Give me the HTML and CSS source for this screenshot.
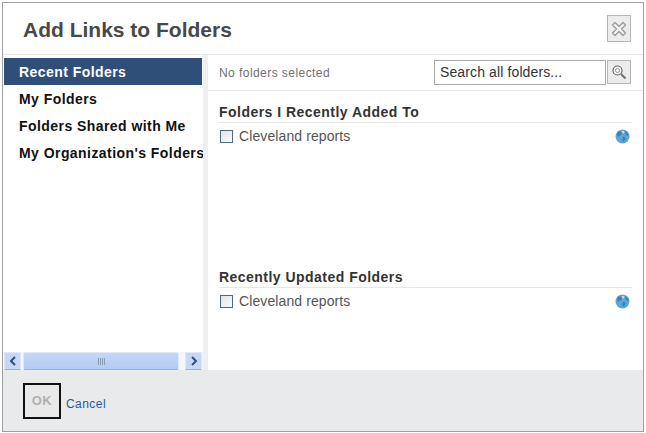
FILE: index.html
```html
<!DOCTYPE html>
<html lang="en">
<head>
<meta charset="utf-8">
<title>Add Links to Folders</title>
<link rel="stylesheet" href="styles.css">
</head>
<body>
<div class="dialog">
  <header class="head">
    <h1 class="title">Add Links to Folders</h1>
    <button class="close" aria-label="Close">
      <svg width="16" height="16" viewBox="0 0 16 16"><path d="M4 1.5 8 5.5 12 1.5 14.500 4 10.500 8 14.500 12 12 14.500 8 10.500 4 14.500 1.500 12 5.500 8 1.500 4Z" fill="#f2f2f2" stroke="#9a9a9a" stroke-width="1.300" stroke-linejoin="round"/></svg>
    </button>
  </header>
  <div class="main">
    <nav class="side">
      <ul class="nav">
        <li class="nav-item active">Recent Folders</li>
        <li class="nav-item">My Folders</li>
        <li class="nav-item">Folders Shared with Me</li>
        <li class="nav-item">My Organization's Folders</li>
      </ul>
      <div class="hscroll">
        <span class="sb-btn"><svg width="8" height="10" viewBox="0 0 8 10"><path d="M6 1 2 5 6 9" fill="none" stroke="#2f4f80" stroke-width="2"/></svg></span>
        <span class="sb-thumb"><span class="grip"></span></span>
        <span class="sb-btn"><svg width="8" height="10" viewBox="0 0 8 10"><path d="M2 1 6 5 2 9" fill="none" stroke="#2f4f80" stroke-width="2"/></svg></span>
      </div>
    </nav>
    <section class="content">
      <div class="toolbar">
        <span class="status">No folders selected</span>
        <div class="search">
          <div class="search-input">Search all folders...</div>
          <button class="search-btn" aria-label="Search">
            <svg width="16" height="16" viewBox="0 0 16 16"><circle cx="6.500" cy="6.500" r="4.500" fill="#f4f4f4" stroke="#666" stroke-width="1.200"/><circle cx="6.500" cy="6.500" r="2" fill="none" stroke="#999"/><path d="M10 10 14.500 14.500" stroke="#777" stroke-width="2.200"/></svg>
          </button>
        </div>
      </div>
      <div class="group first">
        <h2 class="group-title">Folders I Recently Added To</h2>
        <div class="row">
          <span class="check"></span><span class="label">Cleveland reports</span>
          <svg class="globe" width="15" height="15" viewBox="0 0 15 15"><circle cx="7.500" cy="7.500" r="7" fill="#5ba8d8"/><path d="M3 3C5 2 7 3 7 5 6 7 4 6 3 8 2 7 2 5 3 3ZM8 8C10 7 11 9 10 11 9 13 8 13 7.500 11ZM10 2C12 3 13.500 5 13.500 7 12 7 10 5 10 2Z" fill="#3a7fb0"/><path d="M7 2C9 1.500 10 3 9 4 8 5 7 4 7 2Z" fill="#cfe8f5"/></svg>
        </div>
      </div>
      <div class="group">
        <h2 class="group-title">Recently Updated Folders</h2>
        <div class="row">
          <span class="check"></span><span class="label">Cleveland reports</span>
          <svg class="globe" width="15" height="15" viewBox="0 0 15 15"><circle cx="7.500" cy="7.500" r="7" fill="#5ba8d8"/><path d="M3 3C5 2 7 3 7 5 6 7 4 6 3 8 2 7 2 5 3 3ZM8 8C10 7 11 9 10 11 9 13 8 13 7.500 11ZM10 2C12 3 13.500 5 13.500 7 12 7 10 5 10 2Z" fill="#3a7fb0"/><path d="M7 2C9 1.500 10 3 9 4 8 5 7 4 7 2Z" fill="#cfe8f5"/></svg>
        </div>
      </div>
    </section>
  </div>
  <footer class="foot">
    <button class="ok">OK</button>
    <a class="cancel">Cancel</a>
  </footer>
</div>
</body>
</html>
```
FILE: styles.css
```css
* { box-sizing: border-box; }
html, body { margin: 0; padding: 0; background: #fff; }
body { font-family: "Liberation Sans", Arial, sans-serif; }
.dialog {
  margin: 2px 0 0 2px;
  width: 642px;
  height: 430px;
  border: 1px solid #a0a0a0;
  display: flex;
  flex-direction: column;
  background: #fff;
}
.head {
  height: 52px;
  flex: none;
  border-bottom: 1px solid #e6e6e6;
  display: flex;
  align-items: flex-start;
  justify-content: space-between;
  padding: 12px 12px 0 20px;
}
.title {
  margin: 0;
  font-size: 21px;
  line-height: 29px;
  font-weight: bold;
  color: #484848;
}
.close {
  width: 24px;
  height: 27px;
  padding: 0;
  border: 1px solid #b5b5b5;
  background: #ececec;
  display: flex;
  align-items: center;
  justify-content: center;
}
.main { flex: 1; min-height: 0; display: flex; }
.side {
  width: 200px;
  flex: none;
  display: flex;
  flex-direction: column;
  padding-top: 3px;
}
.nav { list-style: none; margin: 0; padding: 0 0 0 1px; flex: 1; }
.nav-item {
  width: 198px;
  height: 27px;
  padding-left: 15px;
  font-size: 14px;
  line-height: 29px;
  font-weight: bold;
  letter-spacing: 0.44px;
  color: #111;
  white-space: nowrap;
}
.nav-item.active { background: #2f4f78; color: #fff; }
.hscroll {
  height: 18px;
  flex: none;
  display: flex;
  align-items: stretch;
  background: #f4f6fa;
  gap: 2px;
  padding: 0 1px;
}
.sb-btn {
  width: 17px;
  flex: none;
  background: #c6d8f6;
  border: 1px solid #dfe8f8;
  border-bottom-color: #9fb2d0;
  display: flex;
  align-items: center;
  justify-content: center;
}
.sb-thumb {
  flex: 1;
  margin-right: 4px;
  background: linear-gradient(#c3d7f8, #b2cbf3);
  border: 1px solid #dfe8f8;
  border-bottom-color: #9fb2d0;
  border-radius: 2px;
  display: flex;
  align-items: center;
  justify-content: center;
}
.grip {
  width: 7px;
  height: 7px;
  background: repeating-linear-gradient(90deg, #8a9bb8 0 1px, transparent 1px 2px);
}
.content {
  flex: 1;
  min-width: 0;
  border-left: 5px solid #eeeff0;
}
.toolbar {
  height: 36px;
  border-bottom: 1px solid #e6e6e6;
  display: flex;
  align-items: flex-start;
  justify-content: space-between;
  padding: 5px 12px 0 11px;
}
.status {
  font-size: 12px;
  line-height: 26px;
  letter-spacing: 0.44px;
  color: #707070;
}
.search { display: flex; gap: 1px; }
.search-input {
  width: 172px;
  height: 25px;
  border: 1px solid #a8a8a8;
  padding-left: 5px;
  font-size: 14px;
  line-height: 23px;
  letter-spacing: 0.12px;
  color: #333;
  background: #fff;
}
.search-btn {
  width: 24px;
  height: 24px;
  padding: 0;
  border: 1px solid #b5b5b5;
  background: #ececec;
  display: flex;
  align-items: center;
  justify-content: center;
}
.group { padding: 0 11px; }
.group.first { height: 165px; padding-top: 13px; margin-bottom: 13px; }
.group-title {
  margin: 0;
  height: 19px;
  border-bottom: 1px solid #e6e6e6;
  font-size: 14px;
  line-height: 17px;
  font-weight: bold;
  letter-spacing: 0.47px;
  color: #333;
}
.row { display: flex; align-items: center; height: 27px; padding-bottom: 1px; }
.check {
  width: 13px;
  height: 13px;
  margin-left: 1px;
  border: 1px solid #4a6a80;
  background: linear-gradient(135deg, #e4e4e4, #fafafa);
  flex: none;
}
.label {
  margin-left: 6px;
  flex: 1;
  font-size: 14px;
  letter-spacing: 0.1px;
  color: #555;
}
.globe { flex: none; margin-right: 2px; }
.foot {
  height: 61px;
  flex: none;
  background: #e9eaeb;
  display: flex;
  align-items: flex-start;
  padding: 13px 0 0 20px;
}
.ok {
  width: 38px;
  height: 36px;
  padding: 0 0 2px;
  border: 2px solid #111;
  background: #e9e9e9;
  font-family: inherit;
  font-size: 13px;
  font-weight: bold;
  letter-spacing: 0.4px;
  color: #b0b0b0;
}
.cancel {
  margin: 13px 0 0 5px;
  font-size: 12px;
  line-height: 16px;
  letter-spacing: 0.45px;
  color: #1f5a9c;
}
```
